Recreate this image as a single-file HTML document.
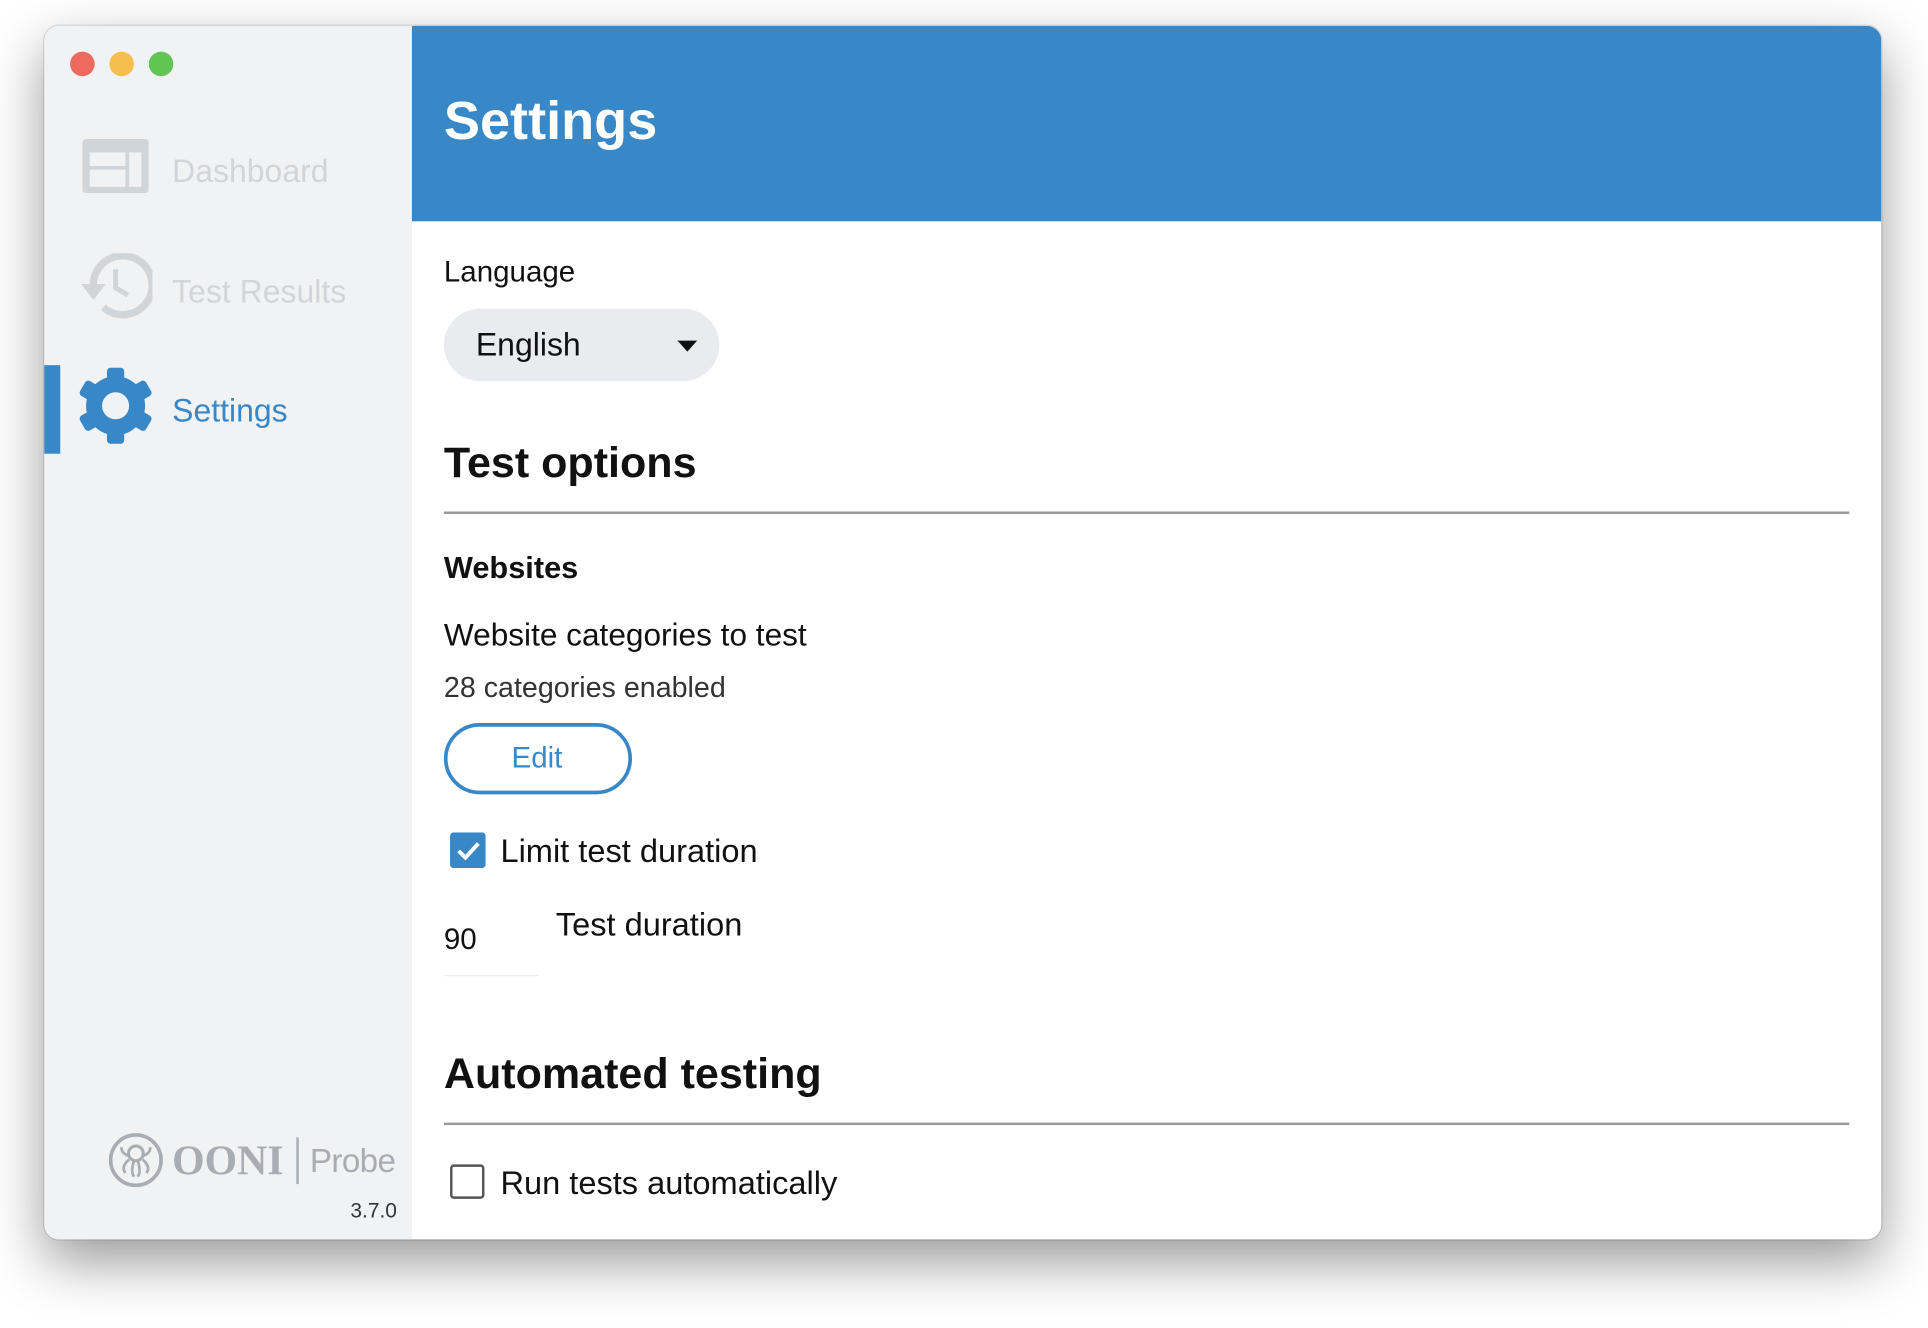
<!DOCTYPE html>
<html><head><meta charset="utf-8"><style>
html,body{margin:0;padding:0;background:#fff;width:1928px;height:1328px;overflow:hidden}
#s{position:absolute;left:0;top:0;width:1568px;height:1080px;transform:scale(1.22959);transform-origin:0 0;font-family:"Liberation Sans",sans-serif}
.a{position:absolute;white-space:nowrap;line-height:1}
#win{position:absolute;left:36px;top:21px;width:1494px;height:987px;border-radius:12px;overflow:hidden;background:#fff;box-shadow:0 18px 45px rgba(0,0,0,.4),0 0 0 1px rgba(0,0,0,.12)}
</style></head><body><div id="s">
<div id="win">
 <div class="a" style="left:0;top:0;width:299px;height:987px;background:#f1f2f4"></div>
 <div class="a" style="left:299px;top:0;width:1195px;height:159px;background:#3888c7"></div>
</div>
<div class="a" style="left:57px;top:42px;width:20px;height:20px;border-radius:50%;background:#ec6a5e"></div>
<div class="a" style="left:89px;top:42px;width:20px;height:20px;border-radius:50%;background:#f5bf4f"></div>
<div class="a" style="left:121px;top:42px;width:20px;height:20px;border-radius:50%;background:#61c554"></div>
<svg class="a" style="left:67px;top:113px" width="54" height="44" viewBox="0 0 54 44"><rect x="0" y="0" width="54" height="44" rx="3" fill="#d0d5da"/><rect x="6" y="11" width="29" height="11" fill="#f1f2f4"/><rect x="6" y="25" width="29" height="14" fill="#f1f2f4"/><rect x="38" y="11" width="10" height="28" fill="#f1f2f4"/></svg>
<div class="a" style="left:140px;top:126px;font-size:26px;color:#d0d5da">Dashboard</div>
<svg class="a" style="left:64px;top:206px" width="60" height="54" viewBox="0 0 60 54"><path d="M12 29 A24 24 0 1 1 20 44" fill="none" stroke="#d0d5da" stroke-width="6"/><path d="M2 25 L22 25 L12 38 Z" fill="#d0d5da"/><path d="M30 13 V28 L40 34" fill="none" stroke="#d0d5da" stroke-width="4"/></svg>
<div class="a" style="left:140px;top:224px;font-size:26px;color:#d0d5da">Test Results</div>
<div class="a" style="left:36px;top:297px;width:13px;height:72px;background:#3888c7"></div>
<svg class="a" style="left:63px;top:299px" width="62" height="62" viewBox="-31 -31 62 62"><g fill="#3888c7"><circle r="24"/><rect x="-7" y="-31" width="14" height="62" rx="3"/><rect x="-7" y="-31" width="14" height="62" rx="3" transform="rotate(60)"/><rect x="-7" y="-31" width="14" height="62" rx="3" transform="rotate(120)"/></g><circle r="11" fill="#f1f2f4"/></svg>
<div class="a" style="left:140px;top:321px;font-size:26px;color:#3888c7">Settings</div>
<svg class="a" style="left:88px;top:921px" width="45" height="45" viewBox="0 0 45 45"><circle cx="22.5" cy="22.5" r="20.5" fill="none" stroke="#a8adb3" stroke-width="3"/><circle cx="22.5" cy="17" r="6" fill="none" stroke="#a8adb3" stroke-width="2.5"/><path d="M17 22 Q10 28 14 33 M21 23 Q18 32 21 36 M24 23 Q27 32 24 36 M28 22 Q35 28 31 33 M16 19 Q10 16 11 12 M29 19 Q35 16 34 12" fill="none" stroke="#a8adb3" stroke-width="2.2"/></svg>
<div class="a" style="left:140px;top:928px;font-size:34px;font-weight:bold;font-family:'Liberation Serif',serif;color:#a8adb3">OONI</div>
<div class="a" style="left:241px;top:925px;width:2px;height:38px;background:#a8adb3"></div>
<div class="a" style="left:252px;top:931px;font-size:27px;color:#a8adb3;letter-spacing:-0.5px">Probe</div>
<div class="a" style="left:285px;top:976px;font-size:17px;color:#333">3.7.0</div>
<div class="a" style="left:361px;top:77px;font-size:44px;font-weight:bold;color:#fff">Settings</div>
<div class="a" style="left:361px;top:210px;font-size:24px;color:#111">Language</div>
<div class="a" style="left:361px;top:251px;width:224px;height:59px;border-radius:30px;background:#e9ebee"></div>
<div class="a" style="left:387px;top:267px;font-size:26px;color:#111">English</div>
<div class="a" style="left:551px;top:277px;width:0;height:0;border-left:8px solid transparent;border-right:8px solid transparent;border-top:9px solid #111"></div>
<div class="a" style="left:361px;top:359px;font-size:35px;font-weight:bold;color:#111">Test options</div>
<div class="a" style="left:361px;top:416px;width:1143px;height:2px;background:#999"></div>
<div class="a" style="left:361px;top:450px;font-size:25px;font-weight:bold;color:#111">Websites</div>
<div class="a" style="left:361px;top:505px;font-size:25.7px;color:#111">Website categories to test</div>
<div class="a" style="left:361px;top:548px;font-size:23.3px;color:#333">28 categories enabled</div>
<div class="a" style="left:361px;top:588px;width:147px;height:52px;border:3px solid #3888c7;border-radius:30px"></div>
<div class="a" style="left:416px;top:605px;font-size:24px;color:#3888c7">Edit</div>
<svg class="a" style="left:366px;top:677px" width="29" height="29" viewBox="0 0 29 29"><rect width="29" height="29" rx="3" fill="#3888c7"/><path d="M7 15 L12.5 20.5 L23 9" fill="none" stroke="#fff" stroke-width="3.2"/></svg>
<div class="a" style="left:407px;top:679px;font-size:26.5px;color:#111">Limit test duration</div>
<div class="a" style="left:361px;top:753px;font-size:24px;color:#111">90</div>
<div class="a" style="left:361px;top:793px;width:77px;height:1px;background:#eee"></div>
<div class="a" style="left:452px;top:739px;font-size:26.5px;color:#111">Test duration</div>
<div class="a" style="left:361px;top:856px;font-size:35px;font-weight:bold;color:#111">Automated testing</div>
<div class="a" style="left:361px;top:913px;width:1143px;height:2px;background:#999"></div>
<div class="a" style="left:366px;top:947px;width:24px;height:24px;border:2px solid #555;border-radius:3px"></div>
<div class="a" style="left:407px;top:949px;font-size:26.5px;color:#111">Run tests automatically</div>
</div></body></html>
